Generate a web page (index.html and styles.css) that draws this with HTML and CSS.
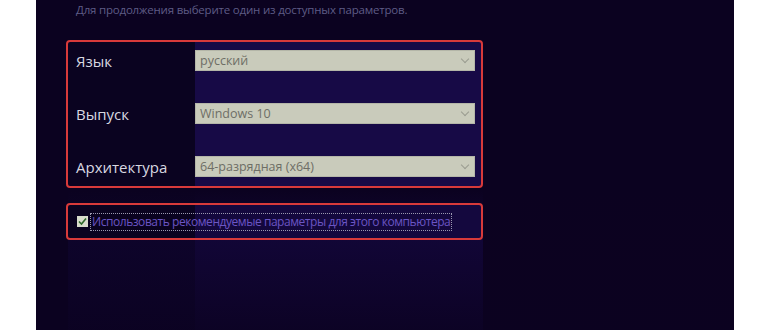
FILE: index.html
```html
<!DOCTYPE html>
<html lang="ru">
<head>
  <meta charset="UTF-8" />
  <meta name="viewport" content="width=device-width, initial-scale=1.0"/>
  <title>Выбор языка, архитектуры и выпуска</title>
  <link rel="stylesheet" href="styles.css">
</head>
<body>
  <div class="setup">
    <div class="hint">Для продолжения выберите один из доступных параметров.</div>

    <div class="params">
      <div class="row">
        <div class="label">Язык</div>
        <div class="select">русский<span class="chev"></span></div>
      </div>
      <div class="row">
        <div class="label">Выпуск</div>
        <div class="select">Windows 10<span class="chev"></span></div>
      </div>
      <div class="row">
        <div class="label">Архитектура</div>
        <div class="select">64-разрядная (x64)<span class="chev"></span></div>
      </div>
    </div>

    <div class="recommend">
      <span class="check">
        <svg width="11" height="11" viewBox="0 0 11 11">
          <rect x="0" y="0" width="11" height="11" fill="#d8dccc"/>
          <path d="M2 5.5 L4.5 8 L9 2.5" fill="none" stroke="#2e6a2a" stroke-width="1.6"/>
        </svg>
      </span>
      <span class="rec-text">Использовать рекомендуемые параметры для этого компьютера</span>
    </div>
  </div>
</body>
</html>
```

FILE: styles.css
```css
body {
  margin: 0;
  background: #fff;
  font-family: "Open Sans", "Noto Sans", sans-serif;
}
.setup {
  margin-left: 36px;
  width: 698px;
  height: 330px;
  box-sizing: border-box;
  padding: 1px 0 0 30px;
  background:
    linear-gradient(180deg, #0b0220 0, #0b0220 190px, rgba(11,2,32,0.35) 240px, rgba(11,2,32,0.85) 330px),
    linear-gradient(90deg, #0b0220 0, #0b0220 32px, #0f0530 32px, #0f0530 159px, #150842 159px, #150842 447px, #0c0220 447px);
  overflow: hidden;
}
.hint {
  font-size: 11.5px;
  letter-spacing: -0.2px;
  color: #5e5c86;
  margin-left: 10px;
  line-height: 18px;
}
.params {
  margin-top: 21px;
  width: 417px;
  height: 148px;
  box-sizing: border-box;
  border: 2px solid #d83a3a;
  border-radius: 4px;
  padding-top: 8px;
  display: flex;
  flex-direction: column;
  gap: 32px;
  background: linear-gradient(90deg, #0a0320 0, #0a0320 127px, #170a46 127px);
}
.row {
  display: flex;
  align-items: center;
  height: 21px;
}
.label {
  width: 127px;
  padding-left: 8px;
  box-sizing: border-box;
  color: #d8d8e0;
  font-size: 15px;
}
.select {
  position: relative;
  width: 280px;
  height: 21px;
  box-sizing: border-box;
  background: #c9cbbb;
  border: 1px solid #b4b6a8;
  color: #6e6e66;
  font-size: 12.5px;
  line-height: 19px;
  padding-left: 4px;
}
.chev {
  position: absolute;
  right: 6px;
  top: 5px;
  width: 5px;
  height: 5px;
  border-right: 1px solid #9a9c90;
  border-bottom: 1px solid #9a9c90;
  transform: rotate(45deg);
}
.recommend {
  margin-top: 15px;
  width: 417px;
  height: 37px;
  box-sizing: border-box;
  border: 2px solid #d83a3a;
  border-radius: 4px;
  display: flex;
  align-items: center;
  padding-left: 9px;
  background: linear-gradient(90deg, #0a0320 0, #0a0320 127px, #14083e 127px);
}
.check {
  display: flex;
  margin-right: 3px;
}
.rec-text {
  color: #6b55c4;
  font-size: 12px;
  letter-spacing: -0.45px;
  white-space: nowrap;
  outline: 1px dotted #9a98b0;
  line-height: 16px;
  padding: 0 1px;
}
```
